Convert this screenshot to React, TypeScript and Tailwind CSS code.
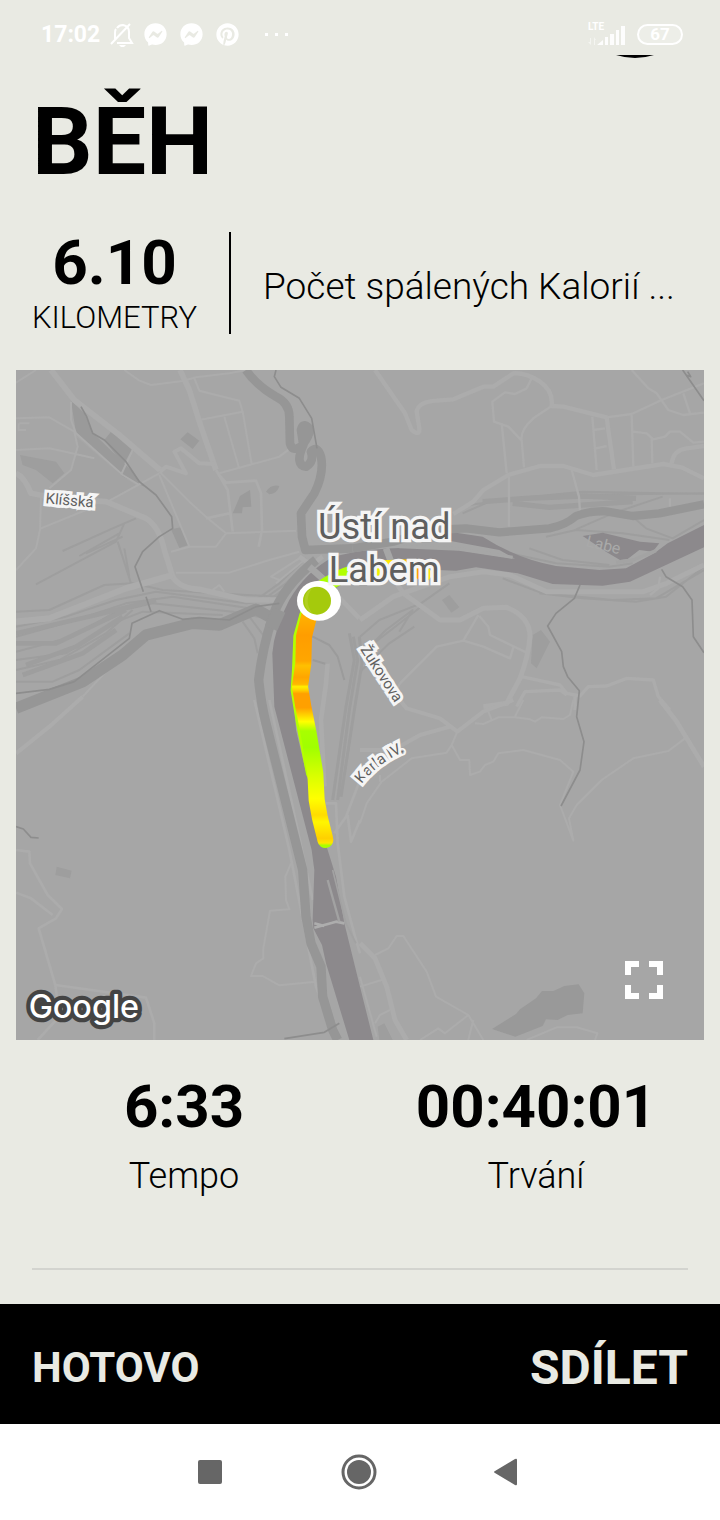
import { FaFacebookMessenger, FaPinterest } from "react-icons/fa";

type MetricProps = {
  value: string;
  label: string;
};

function SignalIcon() {
  return (
    <svg viewBox="0 0 40 28" className="h-7 w-10" fill="#fff" aria-hidden="true">
      <text
        x="1"
        y="9"
        className="font-['Roboto',sans-serif] text-[10px] font-bold"
      >
        LTE
      </text>
      <g opacity="0.5">
        <path d="M1 21h2v-4h1v7zM7 16l2 3h-1v5h-1z" />
      </g>
      <path d="M10 24l6-5v5zM18 16h3v8h-3zM23 13h4v11h-4zM29 9h3v15h-3zM34 5h4v19h-4z" opacity="0.9" />
    </svg>
  );
}

function StatusBar() {
  return (
    <header className="flex h-[55px] items-center justify-between pt-3.5 pr-[37px] pl-[41px] text-white">
      <div className="flex items-center">
        <span className="text-[23px] leading-6 font-bold">17:02</span>
        <svg
          viewBox="0 0 24 24"
          className="ml-2.5 h-6 w-6"
          fill="none"
          stroke="#fff"
          strokeWidth="2"
          aria-hidden="true"
        >
          <path d="M7 5Q9 2 13 2Q19 3 19 9V15L22 20H7M5 16V10Q5 7 6 6" />
          <path d="M1 21L20 1" />
          <path d="M9 22h7l-2 2h-3z" fill="#fff" stroke="none" />
        </svg>
        <FaFacebookMessenger className="ml-2.5 h-[23px] w-[23px]" />
        <FaFacebookMessenger className="ml-[13px] h-[23px] w-[23px]" />
        <FaPinterest className="ml-[13px] h-[23px] w-[23px]" />
        <span className="ml-[26px] flex gap-[7px]">
          <i className="h-[3px] w-[3px] bg-white" />
          <i className="h-[3px] w-[3px] bg-white" />
          <i className="h-[3px] w-[3px] bg-white" />
        </span>
      </div>
      <div className="flex items-center gap-2.5">
        <SignalIcon />
        <span className="flex h-[21px] w-[46px] items-center justify-center rounded-full border-2 border-white bg-white/20 text-[17px] font-bold">
          67
        </span>
      </div>
    </header>
  );
}

// Drawn at three units per pixel; the groups below are the four map tiles.
function RouteMap() {
  return (
    <svg
      viewBox="0 0 2064 2010"
      preserveAspectRatio="xMidYMid slice"
      className="block h-auto w-full bg-[#a6a6a6] font-['Roboto',sans-serif]"
      fill="none"
      strokeLinejoin="round"
      role="img"
      aria-label="Mapa běhu"
    >
      <defs>
        <linearGradient id="pace" gradientUnits="userSpaceOnUse" x1="0" y1="740" x2="0" y2="1440">
          <stop offset="0" stopColor="#ffb000" />
          <stop offset="0.08" stopColor="#ff9d00" />
          <stop offset="0.19" stopColor="#ffa600" />
          <stop offset="0.21" stopColor="#ffc000" />
          <stop offset="0.26" stopColor="#ffa500" />
          <stop offset="0.29" stopColor="#ffb800" />
          <stop offset="0.3" stopColor="#fff000" />
          <stop offset="0.315" stopColor="#ffd000" />
          <stop offset="0.33" stopColor="#ffa000" />
          <stop offset="0.39" stopColor="#ffa000" />
          <stop offset="0.45" stopColor="#ffff00" />
          <stop offset="0.49" stopColor="#a8ff00" />
          <stop offset="0.56" stopColor="#a0ff00" />
          <stop offset="0.68" stopColor="#d8ff00" />
          <stop offset="0.78" stopColor="#ffff00" />
          <stop offset="0.85" stopColor="#ffdc00" />
          <stop offset="0.88" stopColor="#fff600" />
          <stop offset="0.95" stopColor="#ffd000" />
          <stop offset="0.97" stopColor="#ffe600" />
          <stop offset="0.98" stopColor="#a8ff00" />
        </linearGradient>
        <linearGradient id="pace-east" gradientUnits="userSpaceOnUse" x1="900" y1="0" x2="1245" y2="0">
          <stop offset="0" stopColor="#a8ff00" />
          <stop offset="0.3" stopColor="#b4ff00" />
          <stop offset="0.6" stopColor="#fff000" />
          <stop offset="0.78" stopColor="#ffc000" />
          <stop offset="0.88" stopColor="#ff9900" />
          <stop offset="1" stopColor="#ffee00" />
        </linearGradient>
        <path id="karla" d="M1037 1242Q1085 1178 1175 1140" />
      </defs>

      {/* parks and buildings */}
      <g fill="#9e9e9e">
        <path d="M165 92L205 130L232 190L345 300L385 350L320 320L180 190zM285 185L350 235L322 285L265 210z" fill="#9a9a9a" />
        <path d="M515 187L550 212L530 237L493 208zM650 430L672 378L702 360L706 410L680 412L678 430zM750 365Q765 342 790 348Q785 370 760 373zM465 478L495 472L518 525L490 534z" fill="#9b9b9b" />
        <path d="M12 255L120 275L145 310L110 340L60 300L20 285z" />
        <path d="M180 200L320 320L360 345L275 392L120 385L100 355L160 305L182 250z" fill="#a3a3a3" />
        <path d="M1278 690L1300 675L1330 712L1306 728zM1550 795L1575 780L1602 815L1562 895L1545 880z" />
        <path d="M122 1490L167 1502L162 1525L118 1515z" />
        <path d="M1428 1977L1500 1932L1512 1918L1560 1885L1578 1863L1612 1863L1645 1848L1688 1843L1705 1870L1700 1930L1655 1935L1625 1950L1590 1948L1580 1968L1498 2000z" fill="#999" />
        <path d="M1085 1970L1105 1960L1130 2010H1090z" />
      </g>

      {/* railways */}
      <g stroke="#9e9e9e" strokeWidth="6">
        <path d="M140 543L290 475L360 445M190 558L310 490M60 643L300 515L325 460M305 515L345 640M325 535L340 620M210 550L320 500" />
        <path d="M0 725L100 720L265 645L350 640L440 660L640 672L790 680" />
        <path d="M0 770L150 740L300 690L420 665L690 700L790 690M0 800L180 750L330 700L470 680L700 715M0 845L170 800L300 725L410 700L650 725L750 745M0 870L150 850L290 760L380 725L620 735" />
        <path d="M0 900L130 870L270 790L350 720M0 935L110 935L190 900L340 790" />
        <path d="M0 790L240 735L420 690M0 820L120 820L330 720M30 885L180 830L320 740M20 915L200 850L300 780" strokeWidth="14" />
        <path d="M680 755L715 805L725 850M700 740L745 800M720 690L790 640L870 565M740 690L810 640L890 565M760 690L820 645L905 565" />
        <path d="M1340 430L1420 395L1650 375L2064 370M1360 405L1500 385L1700 365L2064 372" />
        <path d="M1400 395L1530 385L1700 378L1860 385M1490 400L1600 412L1850 395" strokeWidth="16" />
        <path d="M1400 505L1480 550L1620 580L1780 590L1850 580M1540 535L1640 570L1780 585M1590 500L1680 480L1820 490L1960 510M1680 478L1790 430L1940 380M1850 440L1890 475L1970 505L2064 450" />
        <path d="M1460 625L1580 670L1790 690L1920 685L2064 600M1570 670L1700 685L1860 695L1950 680L2064 590" />
        <path d="M1032 800L1090 750L1215 700L1300 640M1040 850L1110 780L1190 720L1150 785M1032 905L1120 820L1195 770M1060 830L1215 710" />
        <path d="M1000 790L1015 870L990 1010L950 1290M1012 800L1025 870L1000 1020L965 1290M1030 800L1038 880L1015 1020L975 1280" strokeWidth="9" />
      </g>

      {/* streets */}
      <g stroke="#acacac" strokeWidth="6">
        <path d="M105 0L175 90L310 195L432 300" strokeWidth="18" />
        <path d="M430 305L520 395L575 445L630 490L840 482M0 38L60 0M325 0L370 32L405 45L500 33L540 22L640 10L690 0M535 25L550 62L670 92L680 125L550 150M625 140L668 290M680 125L707 282M610 310L790 260L830 230" />
        <path d="M600 300L635 360L650 485M610 315L630 338L720 332L735 370L738 480L728 530M570 445L640 430" strokeWidth="8" />
        <path d="M492 0L520 60L555 170L600 300" strokeWidth="17" />
        <path d="M432 305L450 290L510 310L475 245L495 235L550 280L600 282" strokeWidth="12" />
        <path d="M0 145L100 142L175 185L185 230L165 300L100 355M0 240L100 235L235 265M165 95V150L180 190L320 315L370 345M352 235L315 315M430 315L520 530L600 530L630 490M275 395L430 310M75 475L210 420M75 380L72 480L60 535L0 600M465 545L520 530M10 160H40M10 180H30M8 160V184" />
        <path d="M0 310Q25 320 45 370L120 385L270 395L390 445Q430 470 445 540L470 620Q490 655 550 658L690 690H790" strokeWidth="17" />
        <path d="M0 755L100 745L330 655L470 615" strokeWidth="19" />
        <path d="M480 608H640L760 570L850 545M790 630L765 620L850 565M780 640L865 570M590 660L610 645L625 665" />
        <path d="M850 560L885 585L920 560M890 600L1030 745M690 690L760 690" strokeWidth="14" />
        <path d="M780 775L890 800L940 825L965 860L985 930M890 870L940 885" stroke="#9b9b9b" />
        <path d="M200 980L100 1070L0 1150" strokeWidth="12" />
        <path d="M270 905L200 980" />
      </g>
      <g stroke="#acacac" strokeWidth="7" transform="translate(1032 0)">
        <path d="M45 0L135 130L155 180Q180 200 178 175L170 125Q175 95 230 92L280 88L370 50H400L460 10Q500 8 540 35T575 108L610 110L740 142L745 180L762 298" strokeWidth="13" />
        <path d="M515 25L500 55L465 72L435 67L397 95L402 155L445 170L485 212Q480 180 520 145L575 108M425 160L440 310M485 210L492 292M697 140L710 300M700 180L735 175M708 235L740 228M815 135L820 290M740 142L815 132L905 90L1032 40M820 185L860 190L880 208L915 200L930 185L960 185L1000 218L1032 215M875 205L877 280M815 0L865 55L890 70L925 120L970 135L1032 128M970 70L990 130M447 320V470M635 300L657 380L660 425M930 385V410" />
        <path d="M280 432L340 395L370 360L445 315L540 288H610L700 315L910 282L965 292L1032 325M935 280Q940 240 980 235L1032 228" strokeWidth="13" />
        <path d="M75 540L90 610L130 670L240 750H300L370 715L440 712Q510 740 510 800Q505 860 480 925L440 1000L370 1010" strokeWidth="15" />
        <path d="M0 750L100 680L270 620L370 605L450 615L560 665H850L920 640L1032 585" strokeWidth="15" />
        <path d="M355 735L310 812L230 830L120 940L110 960L140 1020M310 812L370 830L450 865L460 832M358 738L385 770L390 795L500 848M870 675L895 655L900 620" />
        <path d="M485 920L600 945L620 970L660 978L685 950L740 948L800 925L880 930L895 980L930 1020M470 1010L495 965L600 960L620 975M645 980V1020" strokeWidth="10" />
      </g>
      <g stroke="#acacac" strokeWidth="8" transform="translate(0 990)">
        <path d="M0 450L40 455L42 490L95 585L138 627L120 655L68 685L118 855L130 950L65 1020M118 855L390 893L415 970V1020M0 578L45 595L110 645" />
        <path d="M825 490L808 530L810 600L820 628L762 632L742 745V775L720 790L705 828H740L790 856L900 845" strokeWidth="6" />
        <path d="M930 310H960L965 430L985 590L1020 720L1032 760M955 400L990 350L1032 240M995 345L1005 425L1032 360M715 0L820 450L900 860L960 1020M760 0L830 320L890 600" />
        <path d="M935 -110L930 -50L915 60L925 260" strokeWidth="14" />
      </g>
      <g stroke="#acacac" strokeWidth="6" transform="translate(1032 990)">
        <path d="M110 -10L140 25L240 55L292 95L370 35L460 0M0 150L100 150L180 105L270 80" strokeWidth="12" />
        <path d="M292 95L275 135L300 180H328L330 225L360 215L375 195L400 185L415 160L490 150L600 180L640 215L600 315L640 422L627 355L650 315L725 240L820 175L925 153L975 115M275 135L260 158L155 175L65 245L20 310L0 370M60 225V245M345 70L370 72L415 52H465L510 58L525 65L545 52L610 57L630 45L640 0M385 35L395 60M490 0L465 50" />
        <path d="M900 0L950 65L1032 200" strokeWidth="14" />
        <path d="M0 730L45 775L80 860L105 960L140 1020" strokeWidth="15" />
        <path d="M45 765L85 745L110 708H130L200 815L228 890L325 945L370 1020M325 945L255 1000L235 985L180 1020M340 960L325 1020M0 860L65 840M45 970L60 945L90 930M0 830L50 1010M500 1020L590 982H650L712 1000L705 1020" />
      </g>

      {/* river */}
      <g fill="#8c898c">
        <path d="M775 1010L769 850Q775 775 820 690Q870 605 950 562Q1030 535 1190 533L1330 541L1497 566L1450 540L1300 512V485L1400 500Q1500 565 1620 588L1750 600L1830 595L1915 550L1955 520L2064 465V532L1842 635L1760 647L1610 642L1505 610L1380 592L1320 602L1132 595L1010 625L900 690L845 790L828 900L840 1080L900 1330L935 1440L960 1520L985 1660L1032 1850L1072 2010H1000L930 1780L918 1725L892 1675L890 1650L895 1500L887 1440z" />
        <path d="M1700 498L1760 488L1872 515L1930 520L1910 545L1870 540L1835 567L1812 570L1770 545z" />
      </g>
      <path d="M895 1673L960 1655L985 1660M895 1660L925 1668" stroke="#adadad" strokeWidth="8" />
      <path d="M935 1530L970 1655" stroke="#a2a2a2" strokeWidth="7" />
      <path d="M950 1500L990 1660L1020 1720" stroke="#a2a2a2" strokeWidth="5" />
      <path d="M1150 530L1330 537L1490 562" stroke="#a6a6a6" strokeWidth="10" />
      <path d="M1800 577L1850 570L1920 542" stroke="#a3a3a3" strokeWidth="10" />

      {/* main roads */}
      <g stroke="#969696">
        <path d="M690 0Q720 45 780 80Q820 100 820 140L822 220Q830 250 860 225Q885 190 880 175Q860 155 855 180L862 225Q835 285 870 290Q895 275 885 245Q905 225 915 260Q925 310 895 370L855 430L858 500L868 540L1010 535" strokeWidth="26" />
        <path d="M1010 535L1132 515L1250 480L1350 475L1450 487L1600 475Q1650 465 1680 438Q1720 422 1770 424L1850 438L1930 430L2064 403" strokeWidth="25" />
        <path d="M0 1015L200 935L320 855L390 795L530 760L610 765L720 718L760 740" strokeWidth="34" />
        <path d="M900 570Q800 650 770 740T728 930Q735 1000 750 1060L860 1500L870 1640L885 1720L915 1790L920 1880L950 1980L965 2010" strokeWidth="28" />
        <path d="M790 720L765 775" strokeWidth="40" />
      </g>
      <path d="M1110 535L1125 575M880 590L925 630" stroke="#a6a6a6" strokeWidth="20" />

      {/* streams */}
      <g stroke="#8d8d8d" strokeWidth="5">
        <path d="M195 110L212 140L230 190L265 210L330 275L370 335L420 375L467 440L470 475L430 500L380 545L357 590L382 665M390 680L405 725" />
        <path d="M0 970L100 958L175 935L340 805L348 760L430 722L500 748L550 743L640 750L720 710L790 700" />
        <path d="M780 0L775 20L795 52L850 85L887 145L903 235" />
        <path d="M1692 645L1675 685L1620 730L1595 768L1637 845L1642 890L1655 920L1690 962L1682 1040L1704 1115L1692 1200L1635 1308" />
        <path d="M1937 598L1950 620L2000 650L2028 690L2032 800L2064 848M2000 0L2064 92M2010 15L2024 20L2015 5" />
        <path d="M0 1370L22 1377L45 1402L68 1404M805 2006L925 1987L970 1960" />
      </g>

      {/* run */}
      <path d="M900 665Q960 620 1020 605L1100 593L1180 590L1225 612" stroke="url(#pace-east)" strokeWidth="44" strokeLinecap="round" />
      <path d="M868 735L850 800L846 900L842 960L858 1060L888 1210" stroke="#b4ff00" strokeWidth="36" strokeLinecap="round" />
      <path
        d="M880 735L864 800L862 880L852 950L862 1010L878 1090L898 1210L902 1290L912 1345L926 1400L928 1410"
        stroke="url(#pace)"
        strokeWidth="48"
        strokeLinecap="round"
      />
      <ellipse cx="909" cy="692" rx="66" ry="60" fill="#fff" />
      <circle cx="903" cy="692" r="42" fill="#a5ca0c" />
      <path d="M888 655A42 42 0 0 0 888 729Q862 692 888 655" fill="#b1cf22" />

      {/* labels */}
      <text x="1708" y="528" transform="rotate(14 1708 528)" fill="#a9a9a9" fontSize="48">
        Labe
      </text>
      <g fill="#5f5f5f" stroke="#f5f5f5" strokeWidth="20" strokeLinejoin="miter" paintOrder="stroke">
        <text x="906" y="507" fontSize="109">Ústí nad</text>
        <text x="938" y="637" fontSize="109">Labem</text>
        <g fontSize="45" strokeWidth="18">
          <text x="88" y="400" transform="rotate(5 88 400)">Klíšská</text>
          <text x="1032" y="838" transform="rotate(57 1032 838)">Žukovova</text>
          <text>
            <textPath href="#karla">Karla IV.</textPath>
          </text>
        </g>
      </g>
      <text
        x="38"
        y="1944"
        className="font-['Inter',sans-serif] font-medium"
        fontSize="97"
        fill="#fff"
        stroke="#444"
        strokeWidth="26"
        paintOrder="stroke"
      >
        Google
      </text>
    </svg>
  );
}

function Metric({ value, label }: MetricProps) {
  return (
    <div className="flex flex-col items-center gap-5">
      <span className="text-[60px] leading-[62px] font-bold">{value}</span>
      <span className="text-[36px] leading-9 font-light">{label}</span>
    </div>
  );
}

function NavigationBar() {
  return (
    <nav className="flex h-24 items-center justify-center gap-[100px] bg-white pr-1 text-[#666]">
      <button type="button" aria-label="Poslední aplikace" className="h-12 w-12">
        <svg viewBox="0 0 48 48" fill="currentColor">
          <rect x="12" y="12" width="24" height="24" rx="2" />
        </svg>
      </button>
      <button type="button" aria-label="Domů" className="h-12 w-12">
        <svg viewBox="0 0 48 48" fill="currentColor">
          <circle cx="25" cy="24" r="12" />
          <circle cx="25" cy="24" r="16" fill="none" stroke="currentColor" strokeWidth="3" />
        </svg>
      </button>
      <button type="button" aria-label="Zpět" className="h-12 w-12">
        <svg viewBox="0 0 48 48" fill="currentColor">
          <path d="M13 23L33 11Q35 10 35 12V36Q35 38 33 37L13 25Q11 24 13 23" />
        </svg>
      </button>
    </nav>
  );
}

export default function App() {
  return (
    <div className="bg-[#e9eae3] font-['Roboto',sans-serif] text-black">
      <StatusBar />
      <main>
        <div className="flex justify-end pr-[53px]">
          <svg viewBox="0 0 64 3" className="h-[3px] w-16" aria-hidden="true">
            <path d="M13 0H51Q32 6 13 0" />
          </svg>
        </div>
        <h1 className="mt-9 px-8 text-[95px] leading-[96px] font-bold">BĚH</h1>

        <section className="mt-[42px] flex items-stretch px-8">
          <div className="flex flex-col items-center border-r-2 border-black pr-8">
            <span className="text-[62px] leading-[62px] font-bold">6.10</span>
            <span className="mt-2 text-[31px] leading-8 font-light">KILOMETRY</span>
          </div>
          <p className="min-w-0 flex-1 self-center truncate pt-2 pl-8 text-[37px] leading-[48px] font-light">
            Počet spálených Kalorií ...
          </p>
        </section>

        <section className="relative mx-4 mt-9">
          <RouteMap />
          <button
            type="button"
            aria-label="Celá obrazovka"
            className="absolute right-9 bottom-9 flex h-12 w-12 items-center justify-center"
          >
            <svg viewBox="0 0 38 38" className="h-[38px] w-[38px]" fill="none" stroke="#fff" strokeWidth="6">
              <path d="M3 14V3h11M24 3h11v11M3 24v11h11M24 35h11V24" />
            </svg>
          </button>
        </section>

        <section className="grid grid-cols-2 px-2 pt-9">
          <Metric value="6:33" label="Tempo" />
          <Metric value="00:40:01" label="Trvání" />
        </section>
        <hr className="mx-8 mt-[74px] mb-[34px] border-t-2 border-[#d3d4cf]" />
      </main>
      <footer className="flex h-[120px] items-center justify-between bg-black px-8 pt-2 font-bold text-[#e9eae3]">
        <button type="button" className="text-[42px] leading-[48px]">
          HOTOVO
        </button>
        <button type="button" className="text-[48px] leading-[48px]">
          SDÍLET
        </button>
      </footer>
      <NavigationBar />
    </div>
  );
}
